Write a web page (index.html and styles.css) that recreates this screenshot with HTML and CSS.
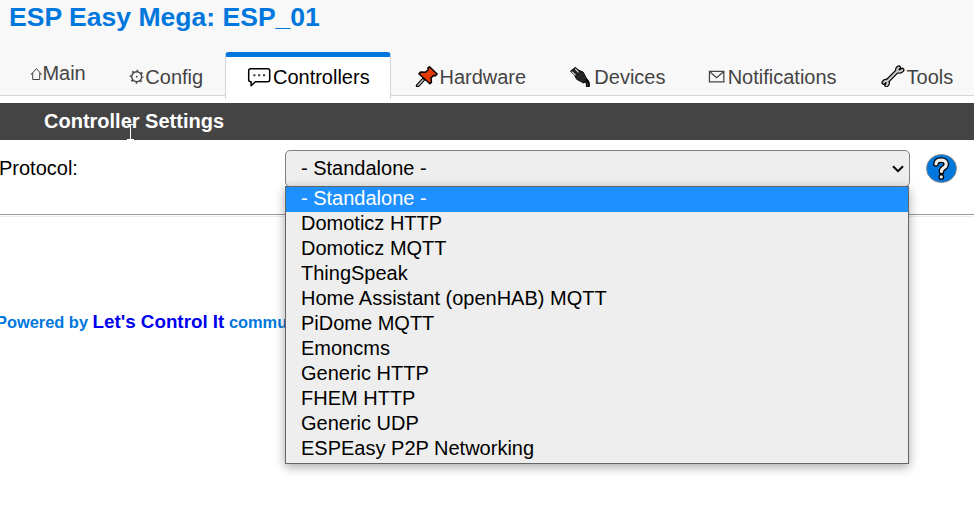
FILE: index.html
```html
<!DOCTYPE html>
<html lang="en">
<head>
<meta charset="utf-8">
<title>ESP Easy Mega: ESP_01</title>
<link rel="stylesheet" href="styles.css">
</head>
<body>
<header class="header">
  <h1 class="title">ESP Easy Mega: ESP_01</h1>
  <nav class="menu">
    <a class="tab tab-main"><svg class="icon icon-main" width="12" height="22" viewBox="0 0 12 22"><path d="M2.5 18.5v-6.3L1 13.5l5.3-6 5 6-1.8-1.3v6.3z" fill="none" stroke="#444"/></svg>Main</a>
    <a class="tab"><svg class="icon icon-config" width="17" height="22" viewBox="0 0 17 22"><g fill="none" stroke="#444"><circle cx="7.9" cy="11.7" r="5.1" stroke-width="1.4"/><circle cx="7.9" cy="11.7" r="6.3" stroke-width="1.7" stroke-dasharray="1.8 3.148" stroke-dashoffset=".9"/></g><circle cx="7.9" cy="11.7" r=".9" fill="#444"/></svg>Config</a>
    <a class="tab active"><svg class="icon icon-wide" width="26" height="22" viewBox="0 0 26 22"><path d="M4.3 3.8h17q2 0 2 2v9q0 2-2 2H9l-4.3 4v-4h-.4q-2 0-2-2v-9q0-2 2-2z" fill="#fff" stroke="#000" stroke-width="1.5" stroke-linejoin="round"/><path d="M7 9.3h2v2H7zm4.8 0h2v2h-2zm4.8 0h2v2h-2z" fill="#333"/></svg>Controllers</a>
    <a class="tab"><svg class="icon icon-wide" width="26" height="22" viewBox="0 0 26 22"><path d="m10 14.5-5.8 6.3" stroke="#000" stroke-width="3.6" stroke-linecap="round"/><path d="M10 14.5 4.2 20.8" stroke="#ccc" stroke-width="1.4"/><path d="m16.1 1.8 7.6 7.2-1.6 1.7-2-.2-2.5 2.6.5 4.1-1.6 1.6-11-10 1.7-1.7 4.7.2 3-2.6-.5-1.6z" fill="#e33b08" stroke="#000" stroke-width="1.5" stroke-linejoin="round"/></svg>Hardware</a>
    <a class="tab"><svg class="icon icon-devices" width="26" height="22" viewBox="-.5 -.9 26 22"><path d="M16 14q4 2 2.8 7.5" fill="none" stroke="#000" stroke-width="4"/><path d="M17.5 16q2 2 1.4 5" fill="none" stroke="#444" stroke-width="1"/><path d="m1 5.2 5-4 3.7 3 4.5 2 4.2 8.1-3.7 3.1-7.3-3.9-2.3-4.4z" fill="#222" stroke="#000" stroke-width="1" stroke-linejoin="round"/><path d="m2.4 5.5 3.8 3.8M6 2.8l3.3 3.5" stroke="#ddd" stroke-width="1.2"/><path d="m8 13 6-6m-3 8.5 5.4-5.4" stroke="#444" stroke-width=".7"/></svg>Devices</a>
    <a class="tab"><svg class="icon icon-mail" width="20" height="22" viewBox="0 0 20 22"><path d="M1.5 6.3h15v10.9h-15zm0 0L9 12.8l7.5-6.5" fill="none" stroke="#444" stroke-width="1.3"/></svg>Notifications</a>
    <a class="tab"><svg class="icon icon-tools" width="27" height="22" viewBox="0 0 27 22"><g fill="none" stroke-linecap="round" stroke-linejoin="round"><path d="M18.8 2.6q-2 1-1.5 3.4L7.2 16.2q-2.6-.6-3.5 1.5m3.5-1.5q1.4 2-.7 4M17.3 6q2.9 1.4 4.9-1" stroke="#000" stroke-width="4.5"/><path d="M18.8 2.6q-2 1-1.5 3.4L7.2 16.2q-2.6-.6-3.5 1.5m3.5-1.5q1.4 2-.7 4M17.3 6q2.9 1.4 4.9-1" stroke="#ccc" stroke-width="2"/></g></svg>Tools</a>
  </nav>
</header>
<main>
  <h2 class="section">Controller Settings
    <svg class="cursor" width="7" height="16" viewBox="0 0 7 16"><path d="M0 .5h7M3.5 1v14M0 15.5h7" stroke="#fff"/></svg>
  </h2>
  <div class="row">
    <label class="label">Protocol:</label>
    <div class="select">- Standalone -
      <svg class="chevron" width="12" height="8" viewBox="0 0 12 8"><path d="m1 1.2 5 5 5-5" fill="none" stroke="#000" stroke-width="2"/></svg>
      <ul class="options">
        <li class="selected">- Standalone -</li>
        <li>Domoticz HTTP</li>
        <li>Domoticz MQTT</li>
        <li>ThingSpeak</li>
        <li>Home Assistant (openHAB) MQTT</li>
        <li>PiDome MQTT</li>
        <li>Emoncms</li>
        <li>Generic HTTP</li>
        <li>FHEM HTTP</li>
        <li>Generic UDP</li>
        <li>ESPEasy P2P Networking</li>
      </ul>
    </div>
    <a class="help"><svg width="31" height="30" viewBox="0 0 31 30"><ellipse cx="15.5" cy="14.5" rx="15" ry="14" fill="#0077dd" stroke="#888"/><g fill="none" stroke-linecap="round"><path d="M10 10q.4-3.8 5-3.8 5.2 0 5.2 4 0 2.3-2.5 3.7-2.2 1.2-2.2 3.5M15.3 22.8v.1" stroke="#000" stroke-width="5.7"/><path d="M10 10q.4-3.8 5-3.8 5.2 0 5.2 4 0 2.3-2.5 3.7-2.2 1.2-2.2 3.5M15.3 22.8v.1" stroke="#eee" stroke-width="3.2"/></g></svg></a>
  </div>
  <div class="rule"></div>
</main>
<footer class="footer">Powered by <a class="link">Let's Control It</a> commu</footer>
</body>
</html>
```
FILE: styles.css
```css
* { box-sizing: border-box; }
body {
  margin: 0;
  min-height: 100vh;
  background: #fff;
  color: #000;
  font: 20px/24px "Liberation Sans", Arial, sans-serif;
}
.header {
  height: 96px;
  background: #f8f8f8;
  border-bottom: 1px solid #d5d5d5;
}
.title {
  margin: 0;
  height: 52px;
  padding: 2px 0 0 9px;
  color: #0077dd;
  font-size: 26.55px;
  line-height: 31px;
}
.menu {
  display: flex;
  gap: 1px;
  padding-left: 9px;
  white-space: nowrap;
}
.tab {
  display: flex;
  flex: none;
  height: 47px;
  padding: 8px 20px 0;
  border: solid transparent;
  border-width: 5px 1px 0;
  color: #444;
}
.tab-main { padding-top: 4px; }
.active {
  background: #fff;
  color: #000;
  border-color: #0077dd #d5d5d5;
  border-radius: 4px 4px 0 0;
}
.icon { flex: none; }
.icon-main { width: 12.4px; }
.icon-config { width: 16.6px; }
.icon-wide { width: 26.8px; }
.icon-devices { width: 25.2px; }
.icon-mail { width: 19.2px; }
.section {
  position: relative;
  height: 37px;
  margin: 7px 0 0;
  padding: 6px 0 0 44px;
  background: #444;
  color: #fff;
  font-size: 20px;
}
.cursor { position: absolute; left: 127px; top: 21px; }
.row {
  display: flex;
  height: 74px;
  padding-top: 10px;
}
.label { width: 285px; padding-top: 6px; margin-left: -1px; margin-right: 1px; }
.select {
  position: relative;
  width: 625px;
  height: 37px;
  padding: 5px 15px;
  background: #eee;
  border: 1px solid #808080;
  border-radius: 5px;
}
.chevron { position: absolute; right: 5px; top: 14px; }
.options {
  position: absolute;
  z-index: 1;
  left: -1px;
  top: 35px;
  width: 624px;
  height: 278px;
  margin: 0;
  padding: 0;
  list-style: none;
  background: #eee;
  border: 1px solid #666;
  box-shadow: 0 3px 10px rgba(0, 0, 0, .35);
}
.options li { height: 25px; padding-left: 15px; line-height: 22px; }
.options .selected { background: #1e90ff; color: #fff; }
.help { height: 30px; margin: 4px 0 0 16px; }
.help svg { display: block; }
.rule {
  height: 3px;
  border-top: 1px solid #999;
  border-bottom: 1px solid #eee;
}
.footer {
  margin: 93px 0 0 -4px;
  color: #0077dd;
  font-size: 16.4px;
  font-weight: bold;
  white-space: nowrap;
}
.link { color: #00e; font-size: 18.8px; }
```
